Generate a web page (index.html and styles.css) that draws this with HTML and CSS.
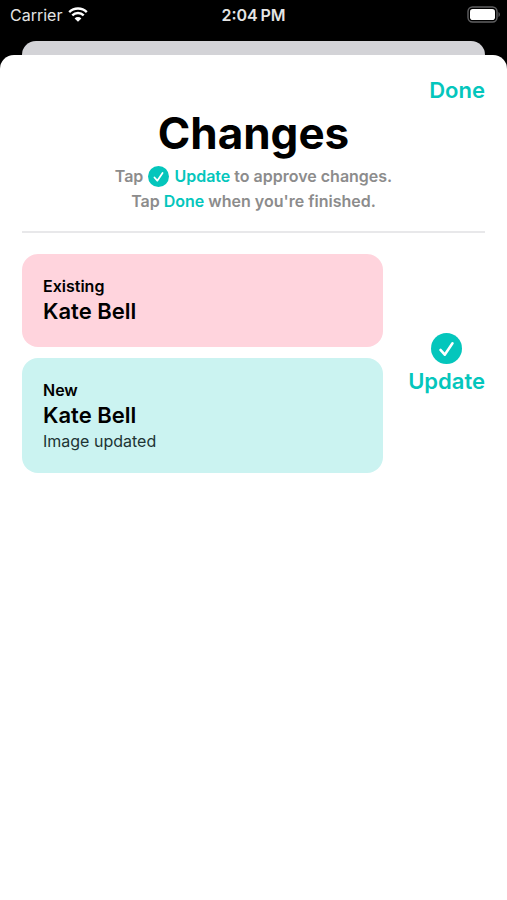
FILE: index.html
```html
<!DOCTYPE html>
<html lang="en">
<head>
<meta charset="utf-8">
<meta name="viewport" content="width=device-width, initial-scale=1">
<title>Changes</title>
<link rel="stylesheet" href="styles.css">
</head>
<body>
<svg class="defs" aria-hidden="true">
  <symbol id="check-circle" viewBox="0 0 30 30">
    <circle cx="15" cy="15" r="15" fill="currentColor"/>
    <path d="M9.2 16.4 13.3 21 20.8 10" fill="none" stroke="#fff" stroke-width="2.5" stroke-linecap="round" stroke-linejoin="round"/>
  </symbol>
</svg>
<header class="status-bar">
  <div class="carrier">
    <span>Carrier</span>
    <svg class="wifi" viewBox="0 0 20 15" aria-hidden="true">
      <path d="M1.2 5.1a12.6 12.6 0 0 1 17.6 0M4.3 8.4a8.1 8.1 0 0 1 11.4 0" fill="none" stroke="#fff" stroke-width="2.4"/>
      <path d="M10 14.8 6.6 11.4a4.8 4.8 0 0 1 6.8 0z" fill="#fff"/>
    </svg>
  </div>
  <time class="clock">2:04&#8201;PM</time>
  <svg class="battery" viewBox="0 0 34 18" aria-hidden="true">
    <rect x="1" y="1" width="29" height="15" rx="4.5" fill="none" stroke="#606062" stroke-width="1.4"/>
    <rect x="3" y="3" width="25" height="11" rx="2.8" fill="#fff"/>
    <path d="M31.5 6v5c1.8-.8 1.8-4.2 0-5z" fill="#606062"/>
  </svg>
</header>
<div class="back-card"></div>
<main class="sheet">
  <nav class="toolbar"><button class="done" type="button">Done</button></nav>
  <section class="intro">
    <h1>Changes</h1>
    <p class="hint">Tap <svg class="hint-icon" aria-hidden="true"><use href="#check-circle"/></svg> <span class="accent">Update</span> to approve changes.</p>
    <p class="hint">Tap <span class="accent">Done</span> when you're finished.</p>
  </section>
  <section class="change">
    <div class="cards">
      <article class="card existing">
        <h2>Existing</h2>
        <p class="name">Kate Bell</p>
      </article>
      <article class="card new">
        <h2>New</h2>
        <p class="name">Kate Bell</p>
        <p class="detail">Image updated</p>
      </article>
    </div>
    <button class="update" type="button">
      <svg class="update-icon" aria-hidden="true"><use href="#check-circle"/></svg>
      <span>Update</span>
    </button>
  </section>
</main>
</body>
</html>
```
FILE: styles.css
```css
* {
  box-sizing: border-box;
}

body {
  margin: 0;
  min-height: 100vh;
  display: flex;
  flex-direction: column;
  background: #000;
  color: #000;
  font-family: Inter, "Liberation Sans", sans-serif;
}

h1, h2, p {
  margin: 0;
}

button {
  padding: 0;
  border: 0;
  background: none;
  color: #04c6bc;
  font: inherit;
  font-size: 22px;
  font-weight: 600;
  line-height: 28px;
}

.defs {
  position: absolute;
  width: 0;
  height: 0;
}

.status-bar {
  display: grid;
  grid-template-columns: 1fr auto 1fr;
  align-items: center;
  height: 41px;
  padding: 0 6px 12px;
  color: #e4e4e4;
  font-size: 16px;
  line-height: 20px;
}

.carrier {
  display: flex;
  align-items: center;
  gap: 6px;
  padding-left: 4px;
}

.wifi {
  width: 20px;
  height: 15px;
}

.clock {
  font-weight: 600;
}

.battery {
  width: 34px;
  height: 18px;
  justify-self: end;
}

.back-card {
  height: 14px;
  margin: 0 22px;
  border-radius: 14px 14px 0 0;
  background: #d3d3d7;
}

.sheet {
  flex: 1;
  padding: 21px 22px;
  border-radius: 14px 14px 0 0;
  background: #fff;
}

.toolbar {
  display: flex;
  justify-content: flex-end;
}

.intro {
  padding-bottom: 17px;
  border-bottom: 2px solid #e8e8ea;
  text-align: center;
}

h1 {
  padding-bottom: 2px;
  font-size: 44px;
  font-weight: 700;
  line-height: 58px;
}

.hint {
  color: #8c8c8c;
  font-size: 16px;
  font-weight: 600;
  line-height: 25px;
}

.hint-icon {
  width: 21px;
  height: 21px;
  margin: 0 1px 2px;
  vertical-align: middle;
  color: #04c6bc;
}

.accent {
  color: #04c6bc;
}

.change {
  display: flex;
  align-items: center;
  gap: 25px;
  padding-top: 21px;
}

.cards {
  flex: 1;
  display: grid;
  gap: 11px;
}

.card {
  padding: 21px;
  border-radius: 16px;
}

.existing {
  background: #ffd4dd;
}

.new {
  background: #cbf3f1;
}

h2 {
  font-size: 16px;
  font-weight: 600;
  line-height: 22px;
}

.name {
  font-size: 22px;
  font-weight: 600;
  line-height: 29px;
}

.detail {
  color: #203434;
  font-size: 16px;
  line-height: 22px;
}

.update {
  display: flex;
  flex-direction: column;
  align-items: center;
  gap: 3px;
}

.update-icon {
  width: 31px;
  height: 31px;
}
```
